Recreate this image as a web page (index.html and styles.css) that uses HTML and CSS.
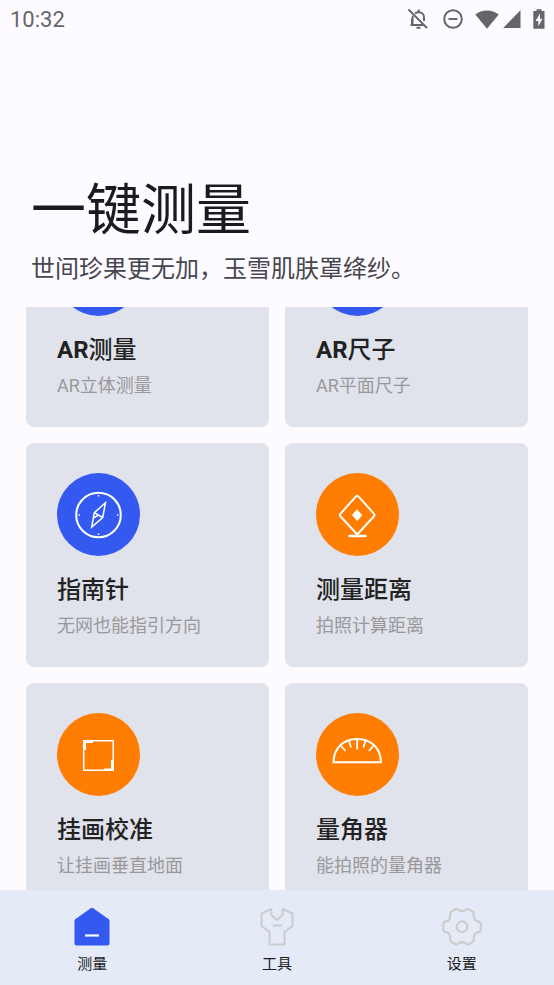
FILE: index.html
```html
<!DOCTYPE html>
<html lang="zh-CN">
<head>
<meta charset="utf-8">
<meta name="viewport" content="width=device-width, initial-scale=1">
<title>一键测量</title>
<link rel="stylesheet" href="styles.css">
</head>
<body>
<div class="status-bar">
  <time class="clock">10:32</time>
  <div class="status-icons">
    <svg width="22" height="22" viewBox="0 0 22 22" fill="none" stroke="currentColor" stroke-width="2"><path d="M5 17V10.500M17 13V9.500C17 6.500 15 4.300 12 4.300Q9.500 4.300 8 5.500M6 8Q5.500 9 5.500 11V17M3.500 17H17"/><path d="M1.500 1.500 20 20" stroke-width="2"/><path d="M9.500 19.700H13.500M11.700 1.500V4"/></svg>
    <svg width="20" height="20" viewBox="0 0 20 20" fill="none" stroke="currentColor" stroke-width="2"><circle cx="10" cy="10" r="8.800"/><path d="M5.500 10H14.500"/></svg>
    <svg class="wifi" width="24" height="19" viewBox="0 0 24 19" fill="currentColor"><path d="M.3 4.500Q5.500.5 12 .5T23.700 4.500L12 18.800Z"/></svg>
    <svg width="18" height="18" viewBox="0 0 18 18" fill="currentColor"><path d="M17.500.3V18H.2Z"/></svg>
    <svg class="battery" width="12" height="20" viewBox="0 0 12 20"><path fill="currentColor" d="M3.500.3H8.500V2H11.500V19.700H.3V2H3.500Z"/><path fill="#fdfbff" d="M7 4.500 2.500 12H5.300V17.200L9.500 9.700H7Z"/></svg>
  </div>
</div>
<header class="page-header">
  <h1>一键测量</h1>
  <p>世间珍果更无加，玉雪肌肤罩绛纱。</p>
</header>
<main class="scroller" id="scroller">
  <div class="cards">
    <a class="card" href="#ar-measure">
      <span class="badge blue"></span>
      <h2><b>AR</b>测量</h2>
      <p>AR立体测量</p>
    </a>
    <a class="card" href="#ar-ruler">
      <span class="badge blue"></span>
      <h2><b>AR</b>尺子</h2>
      <p>AR平面尺子</p>
    </a>
    <a class="card" href="#compass">
      <span class="badge blue"><svg viewBox="0 0 83 83" fill="none" stroke="#fff" stroke-width="2"><circle cx="41.500" cy="42" r="22.300"/><path stroke-width="1.500" d="M48.500 29.700 45.700 44.500 34.700 54 37.300 39.700ZM37.300 39.700 45.700 44.500M41.500 42.100 36.500 45"/><path stroke-width="1.500" d="M41.500 22V23.500M41.500 60.500V62M21.500 42H23M60 42H61.500"/></svg></span>
      <h2>指南针</h2>
      <p>无网也能指引方向</p>
    </a>
    <a class="card" href="#distance">
      <span class="badge orange"><svg viewBox="0 0 83 83" fill="none" stroke="#fff" stroke-width="2" stroke-linejoin="round" stroke-linecap="round"><path d="M40 23.400Q41.200 22 42.400 23.400L58 40.800Q59 42 58 43.200L41.200 61.500 24.400 43.200Q23.400 42 24.400 40.800Z"/><path d="M33.500 63H49.500" stroke-width="2.500"/><path fill="#fff" stroke-width="1" d="M41.200 37 45.700 42.200 41.200 47.500 36.700 42.200Z"/></svg></span>
      <h2>测量距离</h2>
      <p>拍照计算距离</p>
    </a>
    <a class="card" href="#hanging">
      <span class="badge orange"><svg viewBox="0 0 83 83" fill="none" stroke="#fff" stroke-width="1.500"><path d="M26.700 27.700H56.200V57.200H26.700Z"/><path fill="#fff" stroke="none" d="M26 27H36V30H29V37H26ZM57 47V58H47V55.500H54V47Z"/></svg></span>
      <h2>挂画校准</h2>
      <p>让挂画垂直地面</p>
    </a>
    <a class="card" href="#protractor">
      <span class="badge orange"><svg viewBox="0 0 83 83" fill="none" stroke="#fff" stroke-width="2"><path d="M17.500 49.300H65C64.700 34.500 54.300 26 41.200 26S17.800 34.500 17.500 49.300Z"/><path stroke-width="1.800" d="M41.200 26.500V36.500M33 28 35 34.500M49.400 28 47.400 34.500M25.200 33 29.500 38M57.200 33 52.900 38"/></svg></span>
      <h2>量角器</h2>
      <p>能拍照的量角器</p>
    </a>
  </div>
</main>
<nav class="tabs">
  <a href="#measure" aria-current="page">
    <svg width="40" height="40" viewBox="0 0 40 40"><path fill="#3459f1" d="M18.800 1.200Q20 .4 21.200 1.200L36.500 12Q37.500 12.800 37.500 14V36.500Q37.500 38.500 35.500 38.500H4.500Q2.500 38.500 2.500 36.500V14Q2.500 12.800 3.500 12Z"/><path stroke="#fff" stroke-width="2.200" d="M13 28.500H27"/></svg>
    <span>测量</span>
  </a>
  <a href="#tools">
    <svg width="40" height="40" viewBox="0 0 40 40" fill="none" stroke="#ccc" stroke-width="2" stroke-linejoin="round"><path d="M14.300 2 4.500 6.500V19L12.500 25V37.500H27.500V25L35.500 19V6.500L25.700 2V8L20 13 14.300 8Z"/><path d="M15.500 18.500H25"/></svg>
    <span>工具</span>
  </a>
  <a href="#settings">
    <svg width="40" height="40" viewBox="0 0 40 40" fill="none" stroke="#ccc" stroke-width="2.200" stroke-linejoin="round"><path d="M13.500 2.200Q14.500 1.700 15.500 2.500Q20 6 24.500 2.500Q25.500 1.700 26.500 2.200L31 4.800Q32 5.400 31.800 6.500C31 11 33 14.200 37 14.700Q38.500 15 38.700 16.500V22.500Q38.500 24.500 37 24.800C33 25.500 31 28.500 31.800 32.500Q32 34 31 34.700L26.500 37.300Q25.500 37.800 24.500 37Q20 33.500 15.500 37Q14.500 37.800 13.500 37.300L9 34.700Q8 34 8.200 32.500C9 28.500 7 25.500 3 24.800Q1.500 24.500 1.300 22.500V16.500Q1.500 15 3 14.700C7 14.200 9 11 8.200 6.500Q8 5.400 9 4.800Z"/><circle cx="20" cy="19.700" r="5.300"/></svg>
    <span>设置</span>
  </a>
</nav>
<script src="app.js"></script>
</body>
</html>
```
FILE: styles.css
```css
* {
  box-sizing: border-box;
}

body {
  margin: 0;
  height: 100vh;
  display: flex;
  flex-direction: column;
  background: #fdfbff;
  color: #1b1b1f;
  font-family: Roboto, "Noto Sans CJK SC", sans-serif;
}

h1,
h2,
p {
  margin: 0;
}

a {
  color: inherit;
  text-decoration: none;
}

svg {
  display: block;
}

.status-bar {
  display: flex;
  justify-content: space-between;
  align-items: center;
  height: 38px;
  padding: 0 9px 0 10px;
  color: #666569;
}

.clock {
  font-size: 22px;
  font-weight: 400;
}

.status-icons {
  display: flex;
  align-items: center;
  gap: 12px;
}

.status-icons svg:first-child {
  margin-right: 2px;
}

.status-icons .wifi {
  margin-right: -8px;
}

.page-header {
  padding: 132px 31px 19px;
}

.page-header h1 {
  font-size: 55px;
  line-height: 80px;
  font-weight: 400;
}

.page-header p {
  font-size: 24px;
  line-height: 38px;
  color: #46464f;
}

.scroller {
  flex: 1;
  min-height: 0;
  padding: 0 26px;
  overflow-y: auto;
  scrollbar-width: none;
}

.cards {
  display: grid;
  grid-template-columns: 1fr 1fr;
  gap: 16px;
}

.card {
  min-height: 224px;
  padding: 30px 31px 28px;
  border-radius: 8px;
  background: #e0e2ec;
}

.badge {
  display: block;
  width: 83px;
  height: 83px;
  border-radius: 50%;
}

.blue {
  background: #3459f1;
}

.orange {
  background: #ff7d00;
}

.card h2 {
  margin-top: 15px;
  font-size: 24px;
  line-height: 38px;
  font-weight: 500;
  color: #222;
}

.card p {
  margin-top: 4px;
  font-size: 18px;
  line-height: 26px;
  color: #999;
}

.tabs {
  display: grid;
  grid-template-columns: repeat(3, 1fr);
  padding: 17px 0 10px;
  background: #e4ebf7;
}

.tabs a {
  display: flex;
  flex-direction: column;
  align-items: center;
  gap: 6px;
  font-size: 15px;
  line-height: 22px;
}
```
FILE: app.js
```js
// Open the list part-way down, with the first row under the header.
document.getElementById("scroller").scrollTop = 104;
```
